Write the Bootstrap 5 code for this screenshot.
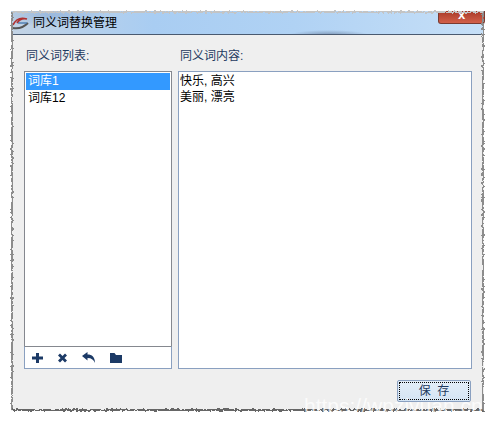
<!DOCTYPE html>
<html lang="zh-CN">
<head>
  <meta charset="UTF-8">
  <title>同义词替换管理</title>
  <link rel="stylesheet" href="https://cdn.jsdelivr.net/npm/bootstrap@5.3.3/dist/css/bootstrap.min.css">
  <style>
    html, body { height: 100%; }
    body { background: #fff; padding: 11px 12px 12px 11px; overflow: hidden; font-family: "Liberation Sans", "Noto Sans CJK SC", sans-serif; font-size: 12px; line-height: 14px; color: #000; }
    .win-frame { position: relative; height: 400px; background: #efefef; }
    .win-edge { position: absolute; inset: 0; border: 2px solid #8c8c8c; border-top-color: #c4c4c4; border-bottom-color: #666; filter: url(#rough); pointer-events: none; }
    .win-title { height: 24px; padding-left: 1px; gap: 4px; font-size: 12px; border-bottom: 1px solid #4a5a70; background: radial-gradient(ellipse 40px 5px at 318px 24px, rgba(90,110,140,.6), transparent), radial-gradient(ellipse 60px 12px at 40px 4px, rgba(120,160,210,.5), transparent), linear-gradient(90deg, #c3d3e4 0, #a9cdf2 30%, #b0d2f4 60%, #c6dff7 100%); }
    .win-close { position: absolute; top: 0; right: -1px; width: 47px; height: 13px; background: linear-gradient(#a83a28, #d2604a); border: 1px solid #7a3a30; border-top: 0; border-radius: 0 0 3px 3px; color: #fff; font: bold 13px/8px "Liberation Sans", sans-serif; text-align: center; }
    .win-body { padding: 14px 12px 0 13px; gap: 6px; }
    .pane-left { width: 148px; }
    .pane-right { width: 294px; }
    .pane-label { height: 22px; padding: 0 2px; color: #1e3a5f; }
    .pane-box { height: 298px; background: #fff; border: 1px solid #8aa0c0; }
    .pane-stack { border: 0; }
    .syn-list { padding: 1px; border: 1px solid #85888f; border-bottom: 0; }
    .syn-item { height: 17px; padding: 1px 2px; }
    .syn-item.on { background: #3399ff; color: #fff; }
    .syn-tools { height: 23px; border: 1px solid #8aa0c0; border-top: 1px solid #85888f; padding-left: 7px; gap: 15px; }
    .syn-text { padding: 1px 1px; line-height: 16px; }
    .win-foot { padding: 11px 13px 0 0; }
    .save-btn { width: 74px; height: 22px; padding: 0; font-size: 12px; color: #1e3a5f; word-spacing: 3px; background: linear-gradient(#e4eef8, #d4e4f4); border: 1px solid #8aa0c0; border-radius: 2px; outline: 1px dotted #000; outline-offset: -3px; }
    .watermark { position: absolute; left: 293px; bottom: -2px; color: rgba(255,255,255,.75); font-size: 21px; line-height: 14px; white-space: nowrap; }
  </style>
</head>
<body>
<svg width="0" height="0" class="position-absolute">
  <filter id="rough"><feTurbulence type="fractalNoise" baseFrequency="0.35" numOctaves="2" seed="4"/><feDisplacementMap in="SourceGraphic" scale="4"/></filter>
</svg>

<div class="win-frame d-flex flex-column">
  <div class="win-title d-flex align-items-center">
    <svg width="17" height="14" viewBox="0 0 17 14">
      <path d="M1 9C4 3 9 1 15 3C11 2 7 4 5 7" fill="none" stroke="#b03030" stroke-width="1.6"/>
      <path d="M1 12C7 13 12 11 16 7" fill="none" stroke="#555" stroke-width="1.8"/>
      <path d="M6 7H15" stroke="#3a6ea8" stroke-width="1.2"/>
    </svg>
    <span>同义词替换管理</span>
  </div>
  <div class="win-close">x</div>

  <div class="win-body d-flex">
    <div class="pane-left">
      <div class="pane-label">同义词列表:</div>
      <div class="pane-box pane-stack d-flex flex-column">
        <div class="syn-list flex-grow-1">
          <div class="syn-item on">词库1</div>
          <div class="syn-item">词库12</div>
        </div>
        <div class="syn-tools d-flex align-items-center">
          <svg width="11" height="10" viewBox="0 0 11 10"><path d="M4 0H7V3.500H11V6.500H7V10H4V6.500H0V3.500H4Z" fill="#1c3a66"/></svg>
          <svg width="9" height="10" viewBox="0 0 9 10"><path d="M1 1.500L8 8.500M8 1.500L1 8.500" stroke="#1c3a66" stroke-width="2.800"/></svg>
          <svg width="13" height="11" viewBox="0 0 13 11"><path d="M0 4L5.500 0V2.500C10 2.500 13 5 13 11C12 8 9.500 6 5.500 6V8.500Z" fill="#1c3a66"/></svg>
          <svg width="12" height="10" viewBox="0 0 12 10"><path d="M0 0H4.500L6 2H12V10H0Z" fill="#1c3a66"/></svg>
        </div>
      </div>
    </div>
    <div class="pane-right">
      <div class="pane-label">同义词内容:</div>
      <div class="pane-box syn-text">快乐, 高兴<br>美丽, 漂亮</div>
    </div>
  </div>

  <div class="win-foot d-flex justify-content-end">
    <button type="button" class="save-btn">保 存</button>
  </div>

  <div class="win-edge"></div>
  <div class="watermark">https://wpziyuan.cn</div>
</div>

<script src="https://cdn.jsdelivr.net/npm/bootstrap@5.3.3/dist/js/bootstrap.bundle.min.js"></script>
</body>
</html>
